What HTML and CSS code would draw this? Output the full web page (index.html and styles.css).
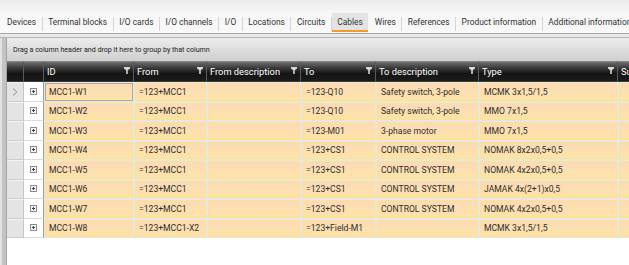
FILE: index.html
```html
<!DOCTYPE html>
<html>
<head>
<meta charset="utf-8">
<link rel="stylesheet" href="styles.css">
</head>
<body>
<div class="top">
  <div class="tabs">
    <span class="tab">Devices</span><span class="sep"></span>
    <span class="tab">Terminal blocks</span><span class="sep"></span>
    <span class="tab">I/O cards</span><span class="sep"></span>
    <span class="tab">I/O channels</span><span class="sep"></span>
    <span class="tab">I/O</span><span class="sep"></span>
    <span class="tab">Locations</span><span class="sep"></span>
    <span class="tab">Circuits</span><span class="sep"></span>
    <span class="tab active">Cables</span><span class="sep hidden"></span>
    <span class="tab">Wires</span><span class="sep"></span>
    <span class="tab">References</span><span class="sep"></span>
    <span class="tab">Product information</span><span class="sep"></span>
    <span class="tab">Additional information</span>
  </div>
</div>
<div class="band"></div>
<div class="main">
  <div class="strip"></div>
  <div class="panel">
    <div class="group">Drag a column header and drop it here to group by that column</div>
    <div class="grid">
      <div class="h"></div><div class="h"></div>
      <div class="h">ID<svg class="f" viewBox="0 0 7 8"><path d="M0 0h7v1.6L4.4 3.6V8H2.6V3.6L0 1.6z"/></svg></div>
      <div class="h">From<svg class="f" viewBox="0 0 7 8"><path d="M0 0h7v1.6L4.4 3.6V8H2.6V3.6L0 1.6z"/></svg></div>
      <div class="h">From description<svg class="f" viewBox="0 0 7 8"><path d="M0 0h7v1.6L4.4 3.6V8H2.6V3.6L0 1.6z"/></svg></div>
      <div class="h">To<svg class="f" viewBox="0 0 7 8"><path d="M0 0h7v1.6L4.4 3.6V8H2.6V3.6L0 1.6z"/></svg></div>
      <div class="h">To description<svg class="f" viewBox="0 0 7 8"><path d="M0 0h7v1.6L4.4 3.6V8H2.6V3.6L0 1.6z"/></svg></div>
      <div class="h">Type<svg class="f" viewBox="0 0 7 8"><path d="M0 0h7v1.6L4.4 3.6V8H2.6V3.6L0 1.6z"/></svg></div>
      <div class="h">Sub type</div>

      <div class="ind"><svg class="chev" viewBox="0 0 6 8"><path d="M1 0.5L4.8 4L1 7.5" fill="none" stroke="#8a8a8a" stroke-width="1"/></svg></div>
      <div class="exp"><span class="box"></span></div>
      <div class="d"><span class="c focus">MCC1-W1</span></div><div class="d"><span class="c">=123+MCC1</span></div><div class="d"><span class="c"></span></div><div class="d"><span class="c">=123-Q10</span></div><div class="d"><span class="c">Safety switch, 3-pole</span></div><div class="d"><span class="c">MCMK 3x1,5/1,5</span></div><div class="d"><span class="c"></span></div>

      <div class="ind"></div><div class="exp"><span class="box"></span></div>
      <div class="d"><span class="c">MCC1-W2</span></div><div class="d"><span class="c">=123+MCC1</span></div><div class="d"><span class="c"></span></div><div class="d"><span class="c">=123-Q10</span></div><div class="d"><span class="c">Safety switch, 3-pole</span></div><div class="d"><span class="c">MMO 7x1,5</span></div><div class="d"><span class="c"></span></div>

      <div class="ind"></div><div class="exp"><span class="box"></span></div>
      <div class="d"><span class="c">MCC1-W3</span></div><div class="d"><span class="c">=123+MCC1</span></div><div class="d"><span class="c"></span></div><div class="d"><span class="c">=123-M01</span></div><div class="d"><span class="c">3-phase motor</span></div><div class="d"><span class="c">MMO 7x1,5</span></div><div class="d"><span class="c"></span></div>

      <div class="ind"></div><div class="exp"><span class="box"></span></div>
      <div class="d"><span class="c">MCC1-W4</span></div><div class="d"><span class="c">=123+MCC1</span></div><div class="d"><span class="c"></span></div><div class="d"><span class="c">=123+CS1</span></div><div class="d"><span class="c">CONTROL SYSTEM</span></div><div class="d"><span class="c">NOMAK 8x2x0,5+0,5</span></div><div class="d"><span class="c"></span></div>

      <div class="ind"></div><div class="exp"><span class="box"></span></div>
      <div class="d"><span class="c">MCC1-W5</span></div><div class="d"><span class="c">=123+MCC1</span></div><div class="d"><span class="c"></span></div><div class="d"><span class="c">=123+CS1</span></div><div class="d"><span class="c">CONTROL SYSTEM</span></div><div class="d"><span class="c">NOMAK 4x2x0,5+0,5</span></div><div class="d"><span class="c"></span></div>

      <div class="ind"></div><div class="exp"><span class="box"></span></div>
      <div class="d"><span class="c">MCC1-W6</span></div><div class="d"><span class="c">=123+MCC1</span></div><div class="d"><span class="c"></span></div><div class="d"><span class="c">=123+CS1</span></div><div class="d"><span class="c">CONTROL SYSTEM</span></div><div class="d"><span class="c">JAMAK 4x(2+1)x0,5</span></div><div class="d"><span class="c"></span></div>

      <div class="ind"></div><div class="exp"><span class="box"></span></div>
      <div class="d"><span class="c">MCC1-W7</span></div><div class="d"><span class="c">=123+MCC1</span></div><div class="d"><span class="c"></span></div><div class="d"><span class="c">=123+CS1</span></div><div class="d"><span class="c">CONTROL SYSTEM</span></div><div class="d"><span class="c">NOMAK 4x2x0,5+0,5</span></div><div class="d"><span class="c"></span></div>

      <div class="ind"></div><div class="exp"><span class="box"></span></div>
      <div class="d"><span class="c">MCC1-W8</span></div><div class="d"><span class="c">=123+MCC1-X2</span></div><div class="d"><span class="c"></span></div><div class="d"><span class="c">=123+Field-M1</span></div><div class="d"><span class="c"></span></div><div class="d"><span class="c">MCMK 3x1,5/1,5</span></div><div class="d"><span class="c"></span></div>
    </div>
  </div>
</div>
</body>
</html>
```

FILE: styles.css
```css
* { box-sizing: border-box; }
html, body {
  margin: 0;
  width: 629px;
  height: 265px;
  overflow: hidden;
  background: #ffffff;
  font-family: Roboto, "Liberation Sans", sans-serif;
}
.top {
  height: 34px;
  background: linear-gradient(#ececec, #f6f6f6 40%, #f9f9f9);
  border-bottom: 1px solid #a8a8a8;
  display: flex;
  align-items: flex-end;
  overflow: hidden;
}
.tabs {
  display: flex;
  align-items: center;
  height: 20px;
  padding-left: 1px;
  white-space: nowrap;
  padding-bottom: 1px;
}
.tab {
  font-size: 8.4px;
  color: #333;
  padding: 2px 5.5px 0 5.5px;
  height: 19px;
  line-height: 15px;
  border-bottom: 2px solid transparent;
}
.tab:first-child { padding-left: 6px; }
.tab.active {
  background: #e3e3e3;
  border-bottom-color: #f39a2a;
}
.sep {
  width: 1px;
  height: 14px;
  margin-top: 2px;
  background: #d4d4d4;
  flex: none;
}
.sep.hidden { background: transparent; }
.band {
  height: 4px;
  background: #e9e9e9;
  border-bottom: 1px solid #b4b4b4;
}
.main {
  display: flex;
  height: 227px;
}
.strip {
  width: 6px;
  flex: none;
  background: linear-gradient(90deg, #e2e2e2 0 2px, #c3c3c3 2px 6px);
}
.panel {
  flex: 1;
  border-left: 1px solid #a4a4a4;
  overflow: hidden;
}
.group {
  height: 23px;
  background: linear-gradient(#ededed, #dadada 60%, #cfcfcf);
  font-size: 7.1px;
  color: #222;
  padding-left: 6px;
  line-height: 23px;
  white-space: nowrap;
}
.grid {
  display: grid;
  grid-template-columns: 17px 20px 90px 73px 94px 75px 103px 139px 60px;
  grid-template-rows: 21px;
  grid-auto-rows: 19.5px;
  width: 700px;
}
.h {
  background: linear-gradient(#6e6e6e, #3c3c3c 30%, #141414 60%, #1b1b1b);
  border-right: 1px solid #5a5a5a;
  border-top: 1px solid #8a8a8a;
  border-bottom: 1px solid #3a3a3a;
  color: #fff;
  font-size: 9.3px;
  display: flex;
  align-items: center;
  justify-content: space-between;
  padding: 0 3px 0 3px;
  white-space: nowrap;
  overflow: hidden;
}
.f {
  width: 6px;
  height: 7px;
  fill: #d8d8d8;
  flex: none;
  margin-top: -3px;
}
.ind {
  background: #e4e4e4;
  border-right: 1px solid #c4c4c4;
  border-bottom: 1px solid #cdcdcd;
  border-top: 1px solid #f4f4f4;
  display: flex;
  align-items: center;
  justify-content: center;
}
.chev { width: 6px; height: 8px; }
.exp {
  background: #ffffff;
  border-right: 1px solid #9e9e9e;
  border-bottom: 1px solid #dcdcdc;
  display: flex;
  align-items: center;
  justify-content: center;
}
.box {
  width: 7px;
  height: 7px;
  border: 1px solid #8c8c8c;
  background:
    linear-gradient(#444, #444) center / 3px 1px no-repeat,
    linear-gradient(#444, #444) center / 1px 3px no-repeat,
    #f2f2f2;
}
.d {
  background: #e6e6e6;
  padding: 1px;
  display: flex;
}
.c {
  flex: 1;
  min-width: 0;
  border: 1px solid #fde38c;
  background: linear-gradient(#fcdab6, #fde0b0 55%, #ffe3a4);
  font-size: 8.6px;
  color: #2e2e2e;
  padding-left: 3px;
  display: flex;
  align-items: center;
  white-space: nowrap;
  overflow: hidden;
}
.c.focus { border-color: #a8a8a8; }
```
